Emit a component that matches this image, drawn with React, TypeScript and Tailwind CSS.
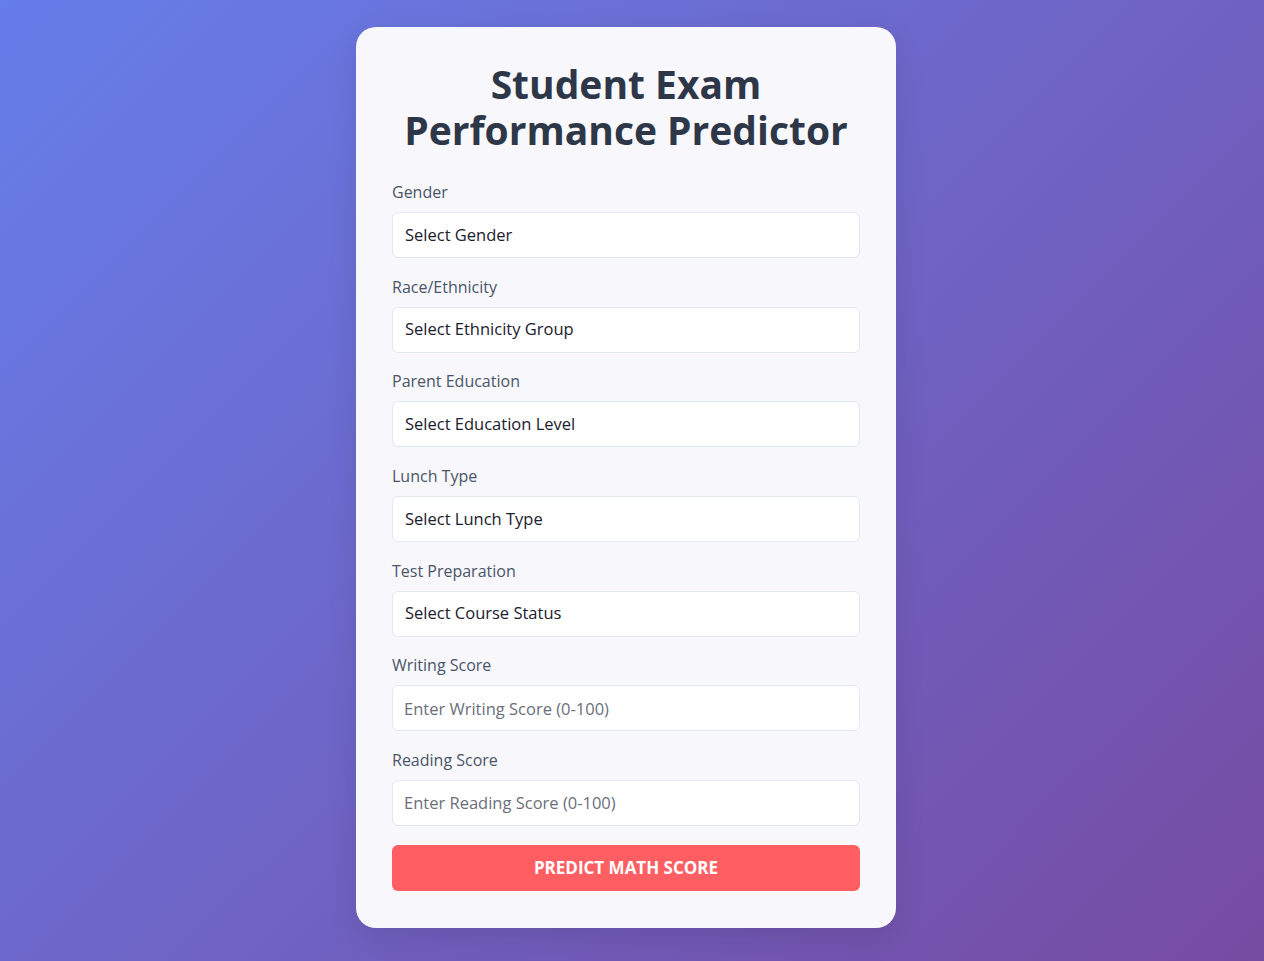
export default function App() {
  const selects = [
    { label: 'Gender', placeholder: 'Select Gender' },
    { label: 'Race/Ethnicity', placeholder: 'Select Ethnicity Group' },
    { label: 'Parent Education', placeholder: 'Select Education Level' },
    { label: 'Lunch Type', placeholder: 'Select Lunch Type' },
    { label: 'Test Preparation', placeholder: 'Select Course Status' },
  ];
  const scores = [
    { label: 'Writing Score', placeholder: 'Enter Writing Score (0-100)' },
    { label: 'Reading Score', placeholder: 'Enter Reading Score (0-100)' },
  ];

  return (
    <div
      className="min-h-screen w-full bg-[linear-gradient(135deg,#667eea_0%,#764ba2_100%)] flex justify-center pt-[27px] pb-[33px] pr-3"
      style={{ fontFamily: '"Open Sans", "Noto Sans", sans-serif' }}
    >
      <div className="w-[540px] h-[901px] bg-[#f7f7fc] rounded-[20px] shadow-[0_10px_30px_rgba(0,0,0,0.1)] px-9 pt-[34px] pb-[37px] flex flex-col">
        <h1 className="text-center text-[39px] leading-[46px] font-bold text-[#2d3748] mb-[27px]">
          Student Exam
          <br />
          Performance Predictor
        </h1>

        <form className="flex flex-col" onSubmit={(e) => e.preventDefault()}>
          {selects.map((s) => (
            <div key={s.label} className="mb-[16.67px]">
              <label className="block h-6 text-[16px] leading-6 text-[#4a5568] mb-2">{s.label}</label>
              <select
                defaultValue=""
                className="w-full h-[46px] px-3 bg-white border border-[#e2e8f0] rounded-md text-[16.5px] text-[#1a202c] appearance-none outline-none"
              >
                <option value="" disabled>
                  {s.placeholder}
                </option>
              </select>
            </div>
          ))}

          {scores.map((s) => (
            <div key={s.label} className="mb-[16.67px]">
              <label className="block h-6 text-[16px] leading-6 text-[#4a5568] mb-2">{s.label}</label>
              <input
                type="number"
                placeholder={s.placeholder}
                className="w-full h-[46px] px-[11px] bg-white border border-[#e2e8f0] rounded-md text-[16.5px] text-[#1a202c] placeholder:text-[#6b6f7b] outline-none"
              />
            </div>
          ))}

          <button
            type="submit"
            className="mt-[2px] w-full h-[46px] rounded-md bg-[#ff5e62] text-white text-[17px] font-bold uppercase"
          >
            Predict Math Score
          </button>
        </form>
      </div>
    </div>
  );
}
